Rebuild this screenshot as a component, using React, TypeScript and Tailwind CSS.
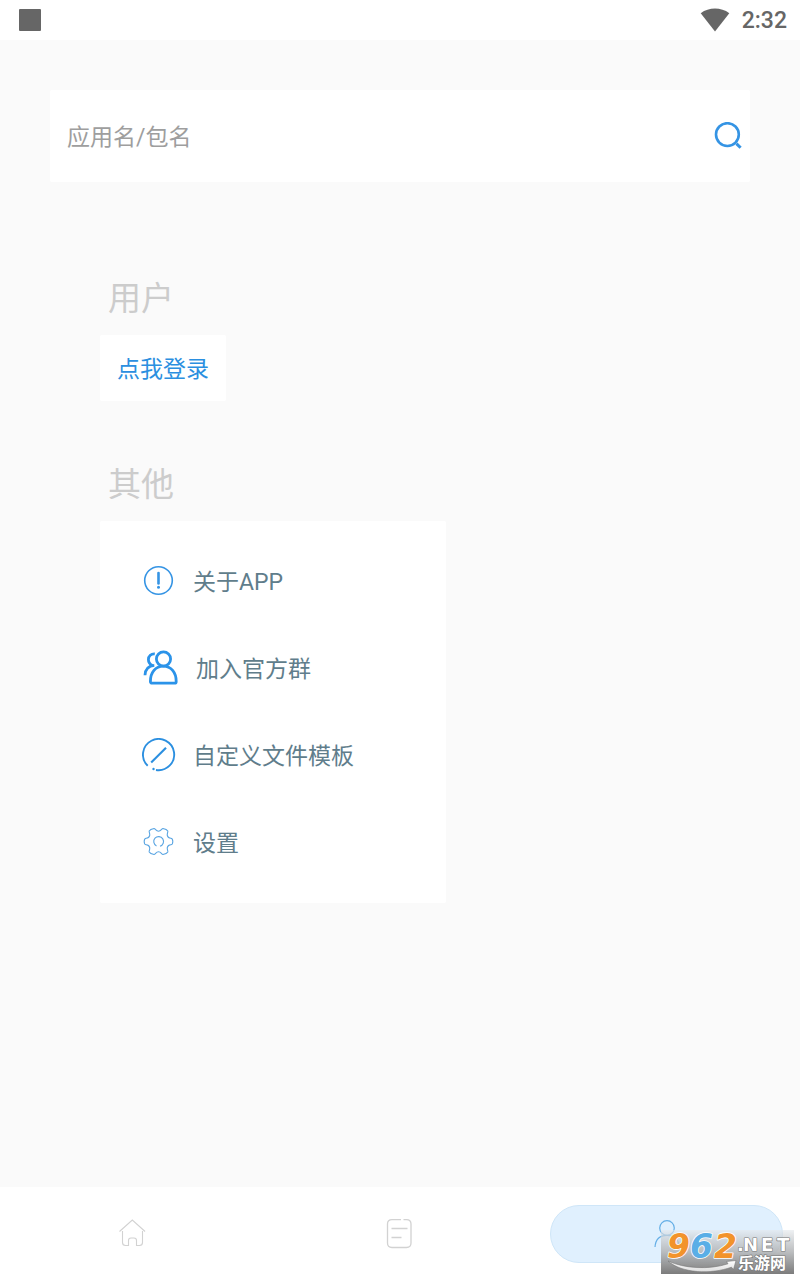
import React, { useState } from "react";

const IconSearch = () => (
  <svg width="28" height="28" viewBox="0 0 28 28" fill="none" stroke="#3594e4" strokeWidth="2.6">
    <circle cx="13.4" cy="12.6" r="11.4" />
    <path d="M22.400 21.600l4.200 4.200" strokeWidth="3" />
  </svg>
);

const IconAbout = () => (
  <svg width="34" height="34" viewBox="0 0 34 34" fill="none" stroke="#3594e4">
    <circle cx="16.5" cy="16.5" r="13.8" strokeWidth="1.6" />
    <path d="M16.5 9v10.5" strokeWidth="2.6" strokeLinecap="round" />
    <circle cx="16.5" cy="23.3" r="1.5" fill="#3594e4" stroke="none" />
  </svg>
);

const IconGroup = () => (
  <svg width="37" height="37" viewBox="0 0 37 37" fill="none" stroke="#2b93e9" strokeWidth="2.8">
    <circle cx="21.500" cy="10" r="7.100" />
    <path d="M10.200 34.200c-1.200 0-1.800-.6-1.800-1.800 0-9 5.200-15.200 12.900-15.200s12.900 6.200 12.900 15.200c0 1.200-.6 1.800-1.800 1.800z" />
    <path d="M12.800 4.900C9.200 4.600 6.400 7 6.400 10.500c0 2.600 1.700 4.900 4.100 6.100" />
    <path d="M12.300 16.300C6.500 16.800 3.200 20.500 3 26.200" />
  </svg>
);

const IconTemplate = () => (
  <svg width="34" height="34" viewBox="0 0 34 34" fill="none" stroke="#2b8fe0">
    <path d="M5.700 27.800A15.600 15.600 0 1 1 14 32" strokeWidth="1.900" />
    <path d="M9.200 24.500L24 9.700" strokeWidth="2.100" />
    <circle cx="11.500" cy="31" r="1.200" fill="#2b8fe0" stroke="none" />
  </svg>
);

const IconSettings = () => (
  <svg width="34" height="34" viewBox="0 0 34 34" fill="none" stroke="#5aa5e2" strokeWidth="1.100">
    <path d="M12 3.500C9.500 4 7.700 5.100 7.200 6c-.4.900.9 2.700.5 4.500-.5 1.700-1.700 2.600-3.500 2.700-1.500.1-2 1.300-2 3.300s.5 3.200 2 3.300c1.800.1 3 1 3.500 2.700.4 1.800-.9 3.600-.5 4.500.5.900 2.300 2 4.800 2.500 1.500 0 1.900-2.700 4.500-2.700s3 2.700 4.500 2.700c2.500-.5 4.300-1.600 4.800-2.500.4-.9-.9-2.700-.5-4.500.5-1.700 1.700-2.600 3.500-2.700 1.500-.1 2-1.300 2-3.300s-.5-3.200-2-3.300c-1.800-.1-3-1-3.500-2.700-.4-1.800.9-3.600.5-4.500-.5-.9-2.300-2-4.800-2.500-1.500 0-1.900 2.700-4.500 2.700S13.500 3.500 12 3.500z" />
    <path d="M14.500 20.900a4.900 4.900 0 1 1 3.500.3" />
  </svg>
);

const IconHome = () => (
  <svg width="30" height="30" viewBox="0 0 30 30" fill="none" stroke="#d2d2d2" strokeWidth="1.100">
    <path d="M1.500 12.500L14.300 1l12.800 11.500" />
    <path d="M4.500 12v11.500c0 2 1 3 3 3h3v-5c0-1.700.8-2.500 2.500-2.500h3c1.700 0 2.500.8 2.500 2.500v5h3c2 0 3-1 3-3V12" />
  </svg>
);

const IconDoc = () => (
  <svg width="30" height="30" viewBox="0 0 30 30" fill="none" stroke="#d2d2d2" strokeWidth="1.300">
    <path d="M16 .700H7C4 .700 2.500 2 2.500 5v19c0 3 1.500 4.500 4.500 4.500h14.500c3 0 4.500-1.500 4.500-4.500V5C26 2 24.500.700 21.500.700H18.500" />
    <path d="M6.500 9.500h16M6.500 18.500h10" />
  </svg>
);

const IconUser = () => (
  <svg width="30" height="30" viewBox="0 0 30 30" fill="none" stroke="#64aee6" strokeWidth="1.200">
    <circle cx="15" cy="9" r="7.300" />
    <path d="M3 28C3.500 21 7.500 16.300 15 16.300S26.800 21 27.300 28" />
  </svg>
);

const MENU = [
  { label: "关于APP", icon: IconAbout },
  { label: "加入官方群", icon: IconGroup },
  { label: "自定义文件模板", icon: IconTemplate },
  { label: "设置", icon: IconSettings },
];

const TABS = [
  { id: "home", label: "首页", icon: IconHome },
  { id: "list", label: "列表", icon: IconDoc },
  { id: "user", label: "我的", icon: IconUser },
];

function StatusBar() {
  return (
    <header className="flex h-10 items-center justify-between bg-white pl-[19px] pr-[13px] text-[#666]">
      <div className="size-[22px] rounded-[1px] bg-[#666]" />
      <div className="flex items-center gap-3">
        <svg width="30" height="24" viewBox="0 0 30 24" fill="#666">
          <path d="M.7 5.200C9-1 21-1 29.300 5.200L15 23.500z" />
        </svg>
        <span className="pt-[2px] font-[Roboto,sans-serif] text-[23px] font-medium">2:32</span>
      </div>
    </header>
  );
}

function Watermark() {
  return (
    <div className="absolute bottom-[6px] right-[6px] h-11 w-[133px] bg-linear-to-b from-[#e4e8ec]/60 via-[#b4b6b8]/90 via-50% to-[#7c7c7c]">
      <svg className="overflow-visible" width="133" height="44" viewBox="0 0 133 44" aria-hidden="true">
        <defs>
          <linearGradient id="swoosh" x1="0" y1="0" x2="0" y2="1">
            <stop offset="0" stopColor="#fff" />
            <stop offset="1" stopColor="#dedede" />
          </linearGradient>
        </defs>
        <path d="M7 31C23 38.500 48 40 67 33.800l-1.500-2.300L75 30.500l-2.500 9-2-2.300C50 44.500 21 43.500 7 31z" fill="url(#swoosh)" stroke="#777" strokeWidth=".6" />
        <g fontFamily="DejaVu Sans, sans-serif" fontWeight="bold" paintOrder="stroke" strokeLinejoin="round">
          <g fontSize="33" fontStyle="italic" stroke="#fff" strokeWidth="1.600">
            <text x="6" y="28" fill="#f2932b">9</text>
            <text x="29" y="28" fill="#5aaee6">6</text>
            <text x="53" y="28" fill="#f2932b">2</text>
          </g>
          <g fontSize="18" fill="#fff" stroke="#777" strokeWidth="1.200">
            <text x="76" y="21">.</text>
            <text x="82" y="21">N</text>
            <text x="100" y="21">E</text>
            <text x="116" y="21">T</text>
          </g>
        </g>
        <text
          x="77"
          y="39"
          fontFamily="Liberation Sans, Noto Sans CJK SC, sans-serif"
          fontSize="16"
          fontWeight="bold"
          fill="#fff"
          stroke="#777"
          strokeWidth="1.200"
          paintOrder="stroke"
        >
          乐游网
        </text>
      </svg>
    </div>
  );
}

export default function App() {
  const [query, setQuery] = useState("");
  const [tab, setTab] = useState("user");

  return (
    <div className="relative flex min-h-screen flex-col bg-[#fafafa] font-[Roboto,'Noto_Sans_CJK_SC',sans-serif] text-[23px]">
      <StatusBar />

      <main className="flex-1 px-[50px] pt-[50px]">
        <form className="flex h-[92px] items-center rounded-xs bg-white pl-[17px] pr-2" onSubmit={(e) => e.preventDefault()}>
          <input
            type="text"
            aria-label="应用名/包名"
            placeholder="应用名/包名"
            value={query}
            onChange={(e) => setQuery(e.target.value)}
            className="h-full min-w-0 flex-1 pt-[2px] text-[#555] outline-none placeholder:text-[#9e9e9e]"
          />
          <button type="submit" aria-label="搜索">
            <IconSearch />
          </button>
        </form>

        <div className="flex flex-col items-start px-[50px]">
          <h2 className="mt-[92px] pl-2 text-[33px] leading-[50px] text-[#ccc]">用户</h2>
          <button className="mt-[11px] h-[66px] rounded-xs bg-white px-[17px] pt-1 text-[#2b8fe0]">点我登录</button>

          <h2 className="mt-[59px] pl-2 text-[33px] leading-[50px] text-[#ccc]">其他</h2>
          <ul className="mt-[11px] w-[346px] max-w-full rounded-xs bg-white pb-[18px] pt-4">
            {MENU.map(({ label, icon: Icon }) => (
              <li key={label}>
                <button className="flex h-[87px] w-full items-center gap-[17px] pl-[42px] text-[#607d8b]">
                  <Icon />
                  <span className="pt-[6px]">{label}</span>
                </button>
              </li>
            ))}
          </ul>
        </div>
      </main>

      <nav className="grid h-[93px] grid-cols-3 bg-white">
        {TABS.map(({ id, label, icon: Icon }) => (
          <div key={id} className="flex items-center px-[17px]">
            <button
              aria-label={label}
              onClick={() => setTab(id)}
              className={`flex h-[58px] w-full items-center justify-center rounded-full border ${
                tab === id ? "border-[#cfe6f8] bg-[#e0f0fe]" : "border-transparent"
              }`}
            >
              <Icon />
            </button>
          </div>
        ))}
      </nav>

      <Watermark />
    </div>
  );
}
